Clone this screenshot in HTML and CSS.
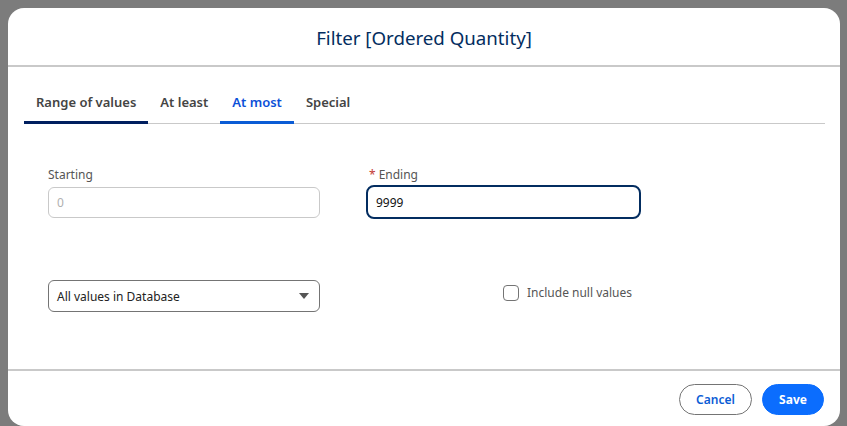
FILE: index.html
```html
<!DOCTYPE html>
<html>
<head>
<meta charset="utf-8">
<link rel="stylesheet" href="styles.css">
</head>
<body>
<div class="modal">
  <div class="modal-header">
    <h1 class="title">Filter [Ordered Quantity]</h1>
  </div>
  <div class="modal-body">
    <div class="tabs">
      <div class="tab tab-selected">Range of values</div>
      <div class="tab">At least</div>
      <div class="tab tab-active">At most</div>
      <div class="tab">Special</div>
    </div>
    <div class="form">
      <div class="field">
        <label class="label">Starting</label>
        <div class="input input-disabled">0</div>
      </div>
      <div class="field">
        <label class="label"><span class="req">*</span>Ending</label>
        <div class="input input-focus">9999</div>
      </div>
      <div class="field">
        <div class="select">
          <span>All values in Database</span>
          <span class="caret"></span>
        </div>
      </div>
      <div class="field check-field">
        <span class="checkbox"></span>
        <span class="check-label">Include null values</span>
      </div>
    </div>
  </div>
  <div class="modal-footer">
    <button class="btn btn-neutral">Cancel</button>
    <button class="btn btn-brand">Save</button>
  </div>
</div>
</body>
</html>
```
FILE: styles.css
```css
* { box-sizing: border-box; }
html, body { margin: 0; padding: 0; }
body {
  background: #7c7c7c;
  font-family: "Noto Sans", "Open Sans", sans-serif;
  width: 847px;
  height: 426px;
  overflow: hidden;
}
.modal {
  margin: 8px 0 0 8px;
  width: 832px;
  height: 418px;
  background: #fff;
  border-radius: 16px;
  display: flex;
  flex-direction: column;
}
.modal-header {
  height: 59px;
  border-bottom: 2px solid #c9c9c9;
  display: flex;
  align-items: center;
  justify-content: center;
  padding-top: 2px;
}
.title {
  margin: 0;
  font-size: 18.7px;
  font-weight: 400;
  color: #032d60;
}
.modal-body {
  flex: 1;
}
.tabs {
  display: flex;
  margin: 19px 15px 0 16px;
  border-bottom: 1px solid #c9c9c9;
}
.tab {
  padding: 6px 12px 9px;
  line-height: 20px;
  font-size: 13px;
  font-weight: 600;
  color: #444;
  border-bottom: 3px solid transparent;
  margin-bottom: -1px;
}
.tab-selected { border-bottom-color: #001f5f; }
.tab-active { color: #0b50d8; border-bottom-color: #0b5cd5; }
.form {
  display: grid;
  grid-template-columns: 272px 275px;
  column-gap: 46px;
  row-gap: 61px;
  padding: 43px 0 0 40px;
}
.field { display: flex; flex-direction: column; }
.label {
  font-size: 12px;
  line-height: 16px;
  color: #555;
  margin-bottom: 4px;
}
.req { color: #c23934; margin: 0 3px 0 3px; }
.input {
  height: 31px;
  border: 1px solid #c9c9c9;
  border-radius: 6px;
  padding: 0 8px;
  font-size: 12px;
  display: flex;
  align-items: center;
  color: #111;
}
.input-disabled { color: #b0b0b0; }
.input-focus {
  height: 34px;
  margin-top: -2px;
  border: 2px solid #032d60;
  border-radius: 8px;
  padding: 0 8px;
}
.select {
  height: 32px;
  border: 1px solid #747474;
  border-radius: 6px;
  padding: 0 10px 0 8px;
  font-size: 12px;
  color: #222;
  display: flex;
  align-items: center;
  justify-content: space-between;
}
.caret {
  width: 0; height: 0;
  border-left: 5px solid transparent;
  border-right: 5px solid transparent;
  border-top: 6px solid #555;
}
.check-field {
  flex-direction: row;
  align-items: center;
  align-self: start;
  padding: 4px 0 0 137px;
}
.checkbox {
  width: 16px; height: 16px;
  border: 1px solid #747474;
  border-radius: 4px;
  margin-right: 8px;
}
.check-label { font-size: 12px; color: #555; }
.modal-footer {
  border-top: 2px solid #c9c9c9;
  height: 57px;
  display: flex;
  justify-content: flex-end;
  align-items: flex-start;
  padding: 13px 16px 0 0;
  gap: 10px;
}
.btn {
  height: 31px;
  border-radius: 16px;
  font-family: inherit;
  font-size: 12px;
  font-weight: 600;
  padding: 0 16px;
  cursor: pointer;
}
.btn-neutral {
  width: 73px;
  background: #fff;
  border: 1px solid #747474;
  color: #0b5cd5;
}
.btn-brand {
  width: 62px;
  background: #0b6dfe;
  border: 1px solid #0b6dfe;
  color: #fff;
  font-weight: 700;
}
```
